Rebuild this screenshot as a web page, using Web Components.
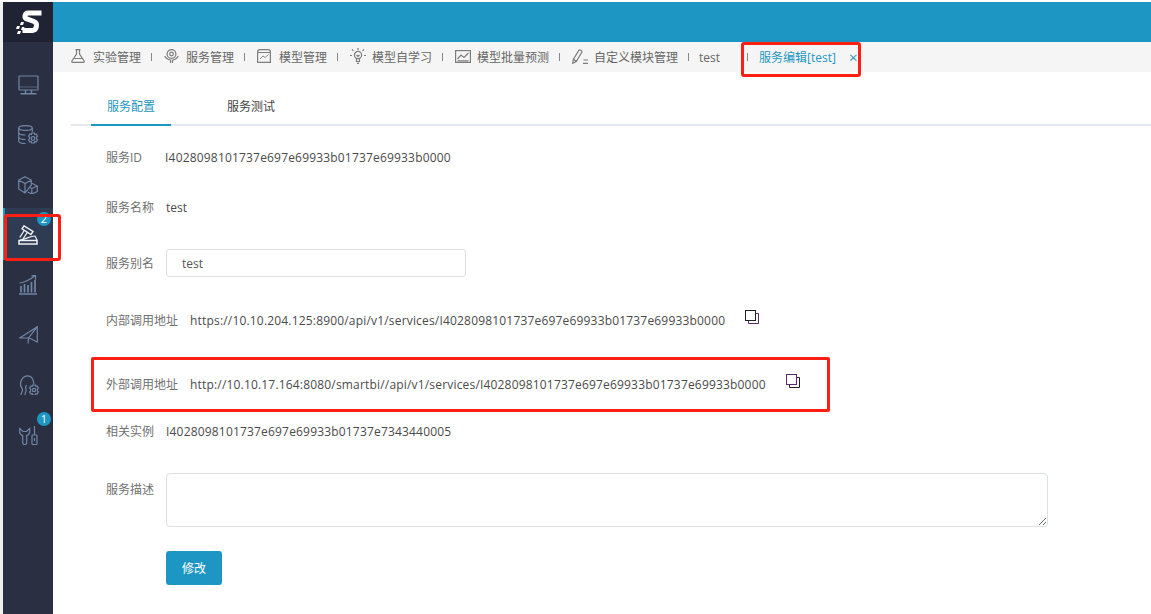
<!DOCTYPE html>
<html lang="zh">
<head>
<meta charset="utf-8">
<title>服务编辑</title>
<style>
  html, body { margin: 0; height: 100%; }
  body { background: #fff; font: 12px "Open Sans", "Noto Sans CJK SC", sans-serif; overflow: hidden; }
</style>
</head>
<body>
<app-shell>
  <side-nav slot="side"></side-nav>
  <tab-strip slot="tabs"></tab-strip>
  <service-form></service-form>
</app-shell>

<script>
(() => {
  const svg = (w, h, body, sw = 1.2) =>
    `<svg width="${w}" height="${h}" viewBox="0 0 ${w} ${h}" fill="none" stroke="currentColor" stroke-width="${sw}" aria-hidden="true">${body}</svg>`;

  const SIDE_ICONS = [
    // monitor
    svg(21, 20, '<rect x="1" y="1" width="19" height="14" rx=".5"/><path d="M1 12h19" stroke-width=".6"/><path d="M7.500 15v3.500M13.500 15v3.500M2.500 18.800h16" stroke-width="1.500"/>'),
    // database + gear
    svg(21, 20, '<ellipse cx="7.500" cy="3" rx="6.800" ry="2.400"/><path d="M.7 3v13c0 1.400 3 2.500 6.800 2.500M.7 7.500c0 1.400 3 2.500 6.800 2.500M.7 12c0 1.400 3 2.500 6.800 2.500M14.300 3v4"/><circle cx="15" cy="13.500" r="1.800"/><path d="M13.700 8h2.600l.4 1.500 1.500-.5 1.300 2.200-1.100 1.100v1.400l1.100 1.100-1.300 2.200-1.500-.5-.4 1.500h-2.600l-.4-1.500-1.500.5-1.300-2.200 1.100-1.100v-1.400l-1.100-1.100 1.300-2.200 1.500.5z"/>'),
    // boxes
    svg(20, 18, '<path d="M7 .7l6.300 3.300v5L7 17 .7 13V4zM.7 4L7 7.500 13.300 4M7 7.500V17"/><path d="M13.300 7l6 3v5.500l-5.500 2.500-4-2M13.800 12.500l5.500-2.500M13.800 12.500V18M13.800 12.500l-3-1.500"/>'),
    // hammer (active)
    svg(20, 20, '<path d="M6 .8l9 5.700-2 3L4 3.800z" stroke-width="1.400"/><path d="M6.500 5L1.800 12.500M9.500 7L5 14" stroke-width="1.300"/><path d="M2 15c6-.8 10-4 15-4l2 4" stroke-width="1.200"/><path d="M1 15.500h18v3.500H1z" stroke-width="1.500"/>'),
    // bar chart + arrow
    svg(18, 20, '<path d="M0 19h18" stroke-width="1.500"/><path d="M2 11v6.500M5.500 9v8.500M9 10v7.500M12.500 7v10.500M16 5v12.500" stroke-width="1.700"/><path d="M.5 8C5 7.500 10 5.500 15.500 1M12.500.7h4v4"/>'),
    // paper plane
    svg(19, 18, '<path d="M.7 12L18.300 .7V16l-8-4zM18.300 .7L9.500 12 9 17.500M.7 12h9.300"/>'),
    // head + gear
    svg(21, 20, '<path d="M3 20c0-3 2-3.500 1.500-5.500S2 11.500 2.500 8C3.500 3 6 .8 9.500 .8S15.500 3 16 9.500"/><path d="M7 20c0-3 1.500-3.500 1-5.500s-1-2.500.5-4.500"/><circle cx="16" cy="15" r="1.700"/><path d="M14.700 10h2.600l.4 1.300 1.400-.4 1.300 2.200-1 1v1.800l1 1-1.300 2.200-1.400-.4-.4 1.300h-2.600l-.4-1.300-1.400.4-1.300-2.200 1-1v-1.800l-1-1 1.300-2.200 1.400.4z"/>'),
    // wrench + screwdriver
    svg(19, 19, '<path d="M.7 2.500V6c0 2 1.500 3 3 3.500V17c0 2 4 2 4 0V9.500c1.500-.5 3-1.500 3-3.500V2.500L7.500 5.500h-3.500z"/><path d="M15.500 0v9"/><rect x="13" y="9" width="5" height="9.500" rx=".8"/><path d="M15.500 12v3"/>')
  ];

  const TAB_ICONS = {
    flask: svg(14, 14, '<path d="M4.500 .6h5M5.500 .6v4.400L.9 12c-.4.700 0 1.400.8 1.400h10.600c.8 0 1.200-.7.800-1.400L8.500 5V.6M3 9.500h8"/>'),
    hand: svg(15, 14, '<circle cx="7.500" cy="5" r="4.400"/><circle cx="7.500" cy="5" r="1.800"/><path d="M.7 7c1 2.500 3 3.500 5.800 4v3M14.300 7c-1 2.500-3 3.500-5.800 4v3"/>'),
    chart: svg(14, 14, '<path d="M.6 3C.6 1.500 1.500.6 3 .6h8c1.500 0 2.400.9 2.400 2.400v10.400H.6zM.6 3.500h12.800"/><path d="M3 10l3-3 2 1.500 3.500-3" stroke-width=".9"/>'),
    bulb: svg(16, 16, '<circle cx="8" cy="7" r="3.600"/><path d="M6.500 10.500v3h3v-3M7 15.400h2M8 0v2M2 1.500l1.400 1.400M14 1.500l-1.400 1.400M0 7.500h2M14 7.500h2M6.500 7l1.500 1.500L9.500 7"/>'),
    line: svg(16, 13, '<rect x=".6" y=".6" width="14.800" height="11.800"/><path d="M2.500 9l3.500-4 3 2.500L13.500 3M2.500 10.800h11"/>'),
    pencil: svg(16, 15, '<path d="M.7 14.300L1.500 10 7 1.200c.8-1 3.300.4 2.900 1.900L4.300 12.500zM1.500 10l2.800 2.500M11 14.300h5M11.500 11h4.500" stroke-width="1.200"/>')
  };

  // outer frame: thin light gutter on the left, sidebar, blue bar, tabs, content
  class AppShell extends HTMLElement {
    connectedCallback() {
      this.attachShadow({ mode: "open" }).innerHTML = `
        <style>
          :host { display: flex; height: 100vh; box-sizing: border-box; padding-top: 2px; background: #fff; color: #555; }
          .gutter { flex: 0 0 3px; background: #f0f0f0; }
          .rest { flex: 1; min-width: 0; display: flex; flex-direction: column; }
          .bar { flex: 0 0 40px; background: #1e96c3; }
          .main { flex: 1; min-height: 0; }
        </style>
        <div class="gutter"></div>
        <slot name="side"></slot>
        <div class="rest">
          <div class="bar"></div>
          <slot name="tabs"></slot>
          <div class="main"><slot></slot></div>
        </div>`;
    }
  }

  class SideNav extends HTMLElement {
    connectedCallback() {
      const root = this.attachShadow({ mode: "open" });
      const items = SIDE_ICONS.map((ic, i) => {
        const active = i === 3 ? " active" : "";
        const badge = i === 3 ? '<span class="badge">2</span><div class="mark"></div>' : i === 7 ? '<span class="badge">1</span>' : "";
        return `<div class="item${active}">${ic}${badge}</div>`;
      }).join("");
      root.innerHTML = `
        <style>
          :host { display: flex; flex-direction: column; flex: 0 0 50px; width: 50px; background: #2a2f42; }
          .logo { height: 40px; background: #1f2333; display: flex; align-items: center; justify-content: center; }
          .list { padding-top: 18px; }
          .item { height: 50px; position: relative; display: flex; align-items: center; justify-content: center; color: #7186a6; box-sizing: border-box; }
          .item.active { height: 52px; margin-top: -2px; padding-top: 2px; background: #2e3b52; color: #eef1f5; box-shadow: inset 2px 0 0 #1e96c3; }
          .badge { position: absolute; left: 34px; top: 4px; width: 14px; height: 14px; border-radius: 50%; background: #1e96c3; color: #fff;
                   font-size: 11px; line-height: 14px; text-align: center; }
          .item:last-child .badge { top: 2px; }
          .mark { position: absolute; left: 1px; top: 6px; width: 57px; height: 47px; box-sizing: border-box; border: 3px solid #fd1e14; border-radius: 3px; }
        </style>
        <div class="logo">
          <svg width="27" height="25" viewBox="0 0 27 25" aria-hidden="true">
            <path fill="none" stroke="#fff" stroke-width="5" d="M26.500 3H13c-3 0-4.500 5-1 6l7 2.500c4 1.500 3 8.500-1.500 9H7.500"/>
            <path fill="#fff" d="M6 12h3l-1 3H5zM2 16h3l-1 3H1zM7 17h2.500l-1 3H6zM3 21h3l-1 3H2z"/>
          </svg>
        </div>
        <div class="list">${items}</div>`;
    }
  }

  class TabStrip extends HTMLElement {
    connectedCallback() {
      const tabs = [
        ["flask", "实验管理"], ["hand", "服务管理"], ["chart", "模型管理"], ["bulb", "模型自学习"],
        ["line", "模型批量预测"], ["pencil", "自定义模块管理"]
      ];
      const cells = tabs.map(([ic, txt]) =>
        `<span class="tab"><span class="ic ${ic}">${TAB_ICONS[ic]}</span>${txt}</span><i class="sep"></i>`).join("");
      this.attachShadow({ mode: "open" }).innerHTML = `
        <style>
          :host { display: flex; align-items: center; flex: 0 0 30px; height: 30px; background: #f5f5f5; color: #666; font-size: 12px; padding-left: 18px; position: relative; }
          .tab { display: inline-flex; align-items: center; white-space: nowrap; }
          .ic { display: inline-flex; flex: 0 0 22px; color: #7d7d7d; margin-top: -2px; }
          .pencil { flex-basis: 22px; }
          .sep { width: 1px; height: 8px; background: #888; margin: 0 12px 0 10px; }
          .plain { margin: 0 17px 0 -2px; }
          .sep.last { margin-right: 11px; }
          .cur { color: #1e96c3; }
          .x { color: #1e96c3; margin-left: 13px; font-size: 15px; line-height: 15px; }
          .mark { position: absolute; left: 688px; top: 0; width: 120px; height: 35px; box-sizing: border-box; border: 3px solid #fd1e14; border-radius: 3px; }
        </style>
        ${cells}
        <span class="tab plain">test</span><i class="sep last"></i>
        <span class="tab cur">服务编辑[test]</span><span class="x">×</span>
        <div class="mark"></div>`;
    }
  }

  class SubTabs extends HTMLElement {
    connectedCallback() {
      this.attachShadow({ mode: "open" }).innerHTML = `
        <style>
          :host { display: flex; height: 54px; margin-left: 18px; border-bottom: 2px solid #e6e8f0; box-sizing: border-box; padding-left: 20px; }
          div { width: 80px; height: 54px; box-sizing: border-box; line-height: 70px; text-align: center; color: #444; }
          .on { color: #1e96c3; border-bottom: 2px solid #1e96c3; }
          div + div { margin-left: 40px; }
        </style>
        <div class="on">服务配置</div><div>服务测试</div>`;
    }
  }

  class FormRow extends HTMLElement {
    connectedCallback() {
      this.attachShadow({ mode: "open" }).innerHTML = `
        <style>
          :host { display: flex; align-items: center; gap: 12px; color: #4a4a4a; white-space: nowrap; }
          :host([top]) { align-items: flex-start; }
          .label { color: #707070; }
          :host([top]) .label { padding-top: 7px; }
        </style>
        <span class="label"><slot name="label"></slot></span><slot></slot>`;
    }
  }

  class CopyIcon extends HTMLElement {
    connectedCallback() {
      const front = this.getAttribute("front") || "#222";
      const back = this.getAttribute("back") || "#5a2a6a";
      this.attachShadow({ mode: "open" }).innerHTML = `
        <style>:host { display: inline-flex; margin: 0 0 6px 20px; }</style>
        <svg width="14" height="14" viewBox="0 0 14 14" fill="none" aria-hidden="true">
          <path d="M3.500 10.500v3h10v-10h-3" stroke="${back}"/>
          <rect x=".5" y=".5" width="10" height="10" stroke="${front}"/>
        </svg>`;
    }
  }

  class ServiceForm extends HTMLElement {
    connectedCallback() {
      const id = "I4028098101737e697e69933b01737e69933b0000";
      this.attachShadow({ mode: "open" }).innerHTML = `
        <style>
          :host { display: block; position: relative; height: 100%; }
          .rows { padding-left: 53px; display: flex; flex-direction: column; }
          form-row { flex: none; }
          .v { letter-spacing: .18px; }
          .input { width: 300px; height: 28px; box-sizing: border-box; border: 1px solid #dcdfe6; border-radius: 3px; padding-left: 15px; line-height: 28px; color: #555; }
          textarea { display: block; width: 882px; height: 54px; box-sizing: border-box; border: 1px solid #dcdfe6; border-radius: 4px; margin: 0; padding: 0; outline: none; }
          .btn { margin: 24px 0 0 60px; width: 56px; height: 34px; border: 0; border-radius: 3px; background: #1e96c3; color: #fff; font: inherit; padding: 0; }
          .mark { position: absolute; left: 38px; top: 285px; width: 739px; height: 55px; box-sizing: border-box; border: 3px solid #fd1e14; border-radius: 2px; }
        </style>
        <sub-tabs></sub-tabs>
        <div class="rows">
          <form-row style="height:62px"><span slot="label">服务ID</span><span class="v" style="margin-left:11px">${id}</span></form-row>
          <form-row style="height:38px"><span slot="label">服务名称</span>test</form-row>
          <form-row style="height:74px"><span slot="label">服务别名</span><div class="input">test</div></form-row>
          <form-row style="height:40px"><span slot="label">内部调用地址</span><span class="v">https://10.10.204.125:8900/api/v1/services/${id}</span><copy-icon style="margin-left:8px"></copy-icon></form-row>
          <form-row style="height:88px"><span slot="label">外部调用地址</span><span class="v">http://10.10.17.164:8080/smartbi//api/v1/services/${id}</span><copy-icon style="margin-left:8px" front="#5a2a6a" back="#222"></copy-icon></form-row>
          <form-row style="height:6px"><span slot="label">相关实例</span><span class="v">I4028098101737e697e69933b01737e7343440005</span></form-row>
          <form-row top style="margin-top:39px"><span slot="label">服务描述</span><textarea aria-label="服务描述"></textarea></form-row>
          <div><button class="btn" type="button">修改</button></div>
        </div>
        <div class="mark"></div>`;
    }
  }

  customElements.define("side-nav", SideNav);
  customElements.define("tab-strip", TabStrip);
  customElements.define("sub-tabs", SubTabs);
  customElements.define("form-row", FormRow);
  customElements.define("copy-icon", CopyIcon);
  customElements.define("service-form", ServiceForm);
  customElements.define("app-shell", AppShell);
})();
</script>
</body>
</html>
